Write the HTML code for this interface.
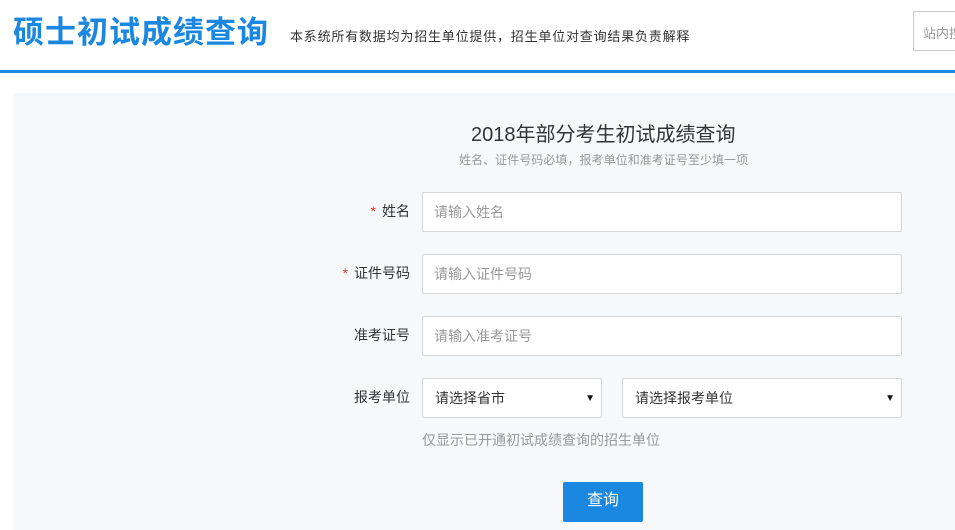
<!DOCTYPE html>
<html><head><meta charset="utf-8"><style>
*{margin:0;padding:0;box-sizing:border-box}
body{width:955px;height:530px;overflow:hidden;background:#fff;font-family:"Liberation Sans","Noto Sans CJK SC",sans-serif;position:relative;color:#333}
.a{position:absolute;white-space:nowrap}
.title{left:13px;top:7px;font-size:31px;font-weight:bold;color:#1a87e0;letter-spacing:1px}
.sub{left:290px;top:26px;font-size:13px;color:#333;letter-spacing:0.8px}
.search{left:913px;top:11px;width:60px;height:40px;border:1px solid #ccc;font-size:13px;color:#999;padding:11px 0 0 9px}
.line{left:0;top:70px;width:955px;height:3px;background:#1a87e0}
.panel{left:13px;top:93px;width:942px;height:437px;background:#f7f8fa}
.h{left:471px;top:118px;font-size:20px;color:#333}
.hs{left:459px;top:151px;font-size:12px;color:#999;letter-spacing:0.05px}
.lab{font-size:14px;color:#333;text-align:right;width:100px;left:310px}
.lab i{color:#e33;font-style:normal;margin-right:6px}
.in{left:422px;width:480px;height:40px;background:#fff;border:1px solid #d6d6d6;border-radius:2px;font-size:14px;color:#999;padding:9px 0 0 11px}
.sel{color:#333;padding-left:12px}
.sel b{position:absolute;right:6px;top:14px;font-size:10px;color:#111}
.hint{left:422px;top:430px;font-size:14px;color:#999}
.btn{left:563px;top:482px;width:80px;height:40px;background:#1a87e0;border-radius:2px;color:#fff;font-size:16px;text-align:center;line-height:38px}
</style></head><body>
<div class="a title">硕士初试成绩查询</div>
<div class="a sub">本系统所有数据均为招生单位提供，招生单位对查询结果负责解释</div>
<div class="a search">站内搜</div>
<div class="a line"></div>
<div class="a panel"></div>
<div class="a h">2018年部分考生初试成绩查询</div>
<div class="a hs">姓名、证件号码必填，报考单位和准考证号至少填一项</div>
<div class="a lab" style="top:201px"><i>*</i>姓名</div>
<div class="a in" style="top:192px">请输入姓名</div>
<div class="a lab" style="top:263px"><i>*</i>证件号码</div>
<div class="a in" style="top:254px">请输入证件号码</div>
<div class="a lab" style="top:325px">准考证号</div>
<div class="a in" style="top:316px">请输入准考证号</div>
<div class="a lab" style="top:387px">报考单位</div>
<div class="a in sel" style="top:378px;width:180px">请选择省市<b>▼</b></div>
<div class="a in sel" style="top:378px;left:622px;width:280px">请选择报考单位<b>▼</b></div>
<div class="a hint">仅显示已开通初试成绩查询的招生单位</div>
<div class="a btn">查询</div>
</body></html>
